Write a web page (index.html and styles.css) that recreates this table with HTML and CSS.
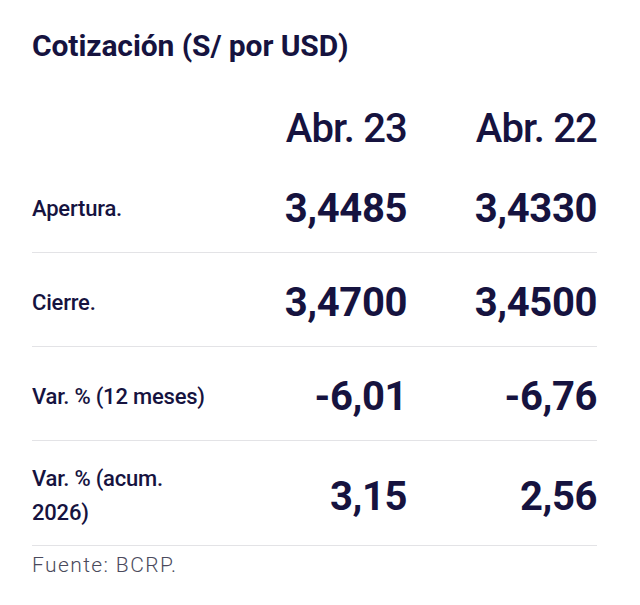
FILE: index.html
```html
<!DOCTYPE html>
<html lang="es">
<head>
<meta charset="utf-8">
<title>Cotización</title>
<link rel="stylesheet" href="styles.css">
</head>
<body>
<main class="card">
  <h2 class="title">Cotización (S/ por USD)</h2>
  <div class="table">
    <div class="row head">
      <span class="label"></span>
      <span class="date">Abr. 23</span>
      <span class="date">Abr. 22</span>
    </div>
    <div class="row">
      <span class="label">Apertura.</span>
      <span class="num">3,4485</span>
      <span class="num">3,4330</span>
    </div>
    <div class="row">
      <span class="label">Cierre.</span>
      <span class="num">3,4700</span>
      <span class="num">3,4500</span>
    </div>
    <div class="row">
      <span class="label">Var. % (12 meses)</span>
      <span class="num">-6,01</span>
      <span class="num">-6,76</span>
    </div>
    <div class="row">
      <span class="label">Var. % (acum. 2026)</span>
      <span class="num">3,15</span>
      <span class="num">2,56</span>
    </div>
  </div>
  <p class="source">Fuente: BCRP.</p>
</main>
</body>
</html>
```
FILE: styles.css
```css
* { box-sizing: border-box; }

body {
  margin: 0;
  background: #ffffff;
  font-family: Roboto, "Liberation Sans", sans-serif;
  color: #16133f;
}

.card {
  padding: 28px 43px 0 32px;
}

.title {
  margin: 0;
  font-size: 30px;
  line-height: 36px;
  font-weight: 700;
  letter-spacing: -0.1px;
}

.table {
  margin-top: 41px;
}

.row {
  display: grid;
  grid-template-columns: 182px 1fr 190px;
  align-items: center;
  padding: 21px 0 15px;
  border-bottom: 1px solid #e3e3e6;
}

.row.head {
  padding: 0 0 6px;
  border-bottom: none;
}

.label {
  font-size: 22px;
  line-height: 34px;
  font-weight: 500;
  letter-spacing: -0.2px;
}

.date {
  text-align: right;
  font-size: 40px;
  line-height: 48px;
  font-weight: 500;
  letter-spacing: -0.8px;
}

.num {
  text-align: right;
  font-size: 40px;
  line-height: 57px;
  font-weight: 700;
  letter-spacing: -0.4px;
}

.source {
  margin: 7px 0 0;
  font-size: 21px;
  line-height: 24px;
  font-weight: 300;
  letter-spacing: 1.4px;
  color: #4a4a5c;
}
```
